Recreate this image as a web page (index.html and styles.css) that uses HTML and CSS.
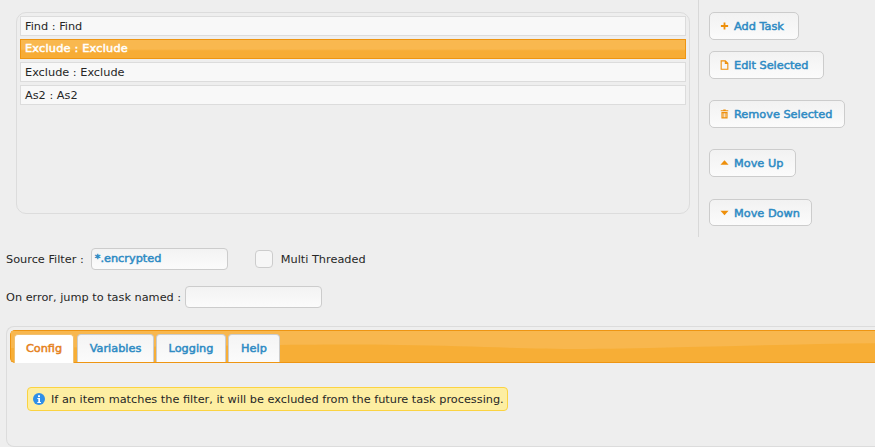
FILE: index.html
```html
<!DOCTYPE html>
<html lang="en">
<head>
<meta charset="utf-8">
<title>Tasks</title>
<link rel="stylesheet" href="styles.css">
</head>
<body>
<div class="top">
  <div class="list-col">
    <div class="list">
      <div class="item">Find : Find</div>
      <div class="item selected">Exclude : Exclude</div>
      <div class="item">Exclude : Exclude</div>
      <div class="item">As2 : As2</div>
    </div>
  </div>
  <div class="actions">
    <button class="btn b-add"><svg class="ico" viewBox="0 0 10 10"><path d="M4 1h2v3h3v2H6v3H4V6H1V4h3z"/></svg>Add Task</button>
    <button class="btn b-edit"><svg class="ico" viewBox="0 0 10 12"><path class="ol" d="M1 1h5l3 3v7H1z M6 1v3h3"/></svg>Edit Selected</button>
    <button class="btn b-remove"><svg class="ico" viewBox="0 0 10 12"><path d="M3.500 0.500h3v1h3v1.200h-9v-1.200h3z M1.300 3.500h7.400v8h-7.400z M2.800 5v5h0.900v-5z M4.600 5v5h0.900v-5z M6.300 5v5h0.900v-5z" fill-rule="evenodd"/></svg>Remove Selected</button>
    <button class="btn b-up"><svg class="ico" viewBox="0 0 10 10"><path d="M5 2l4.500 5h-9z"/></svg>Move Up</button>
    <button class="btn b-down"><svg class="ico" viewBox="0 0 10 10"><path d="M0.500 2.500h9l-4.500 5z"/></svg>Move Down</button>
  </div>
</div>
<div class="form-row row-source">
  <span class="lbl">Source Filter :</span>
  <div class="field filled">*.encrypted</div>
  <span class="check"></span>
  <span class="lbl">Multi Threaded</span>
</div>
<div class="form-row row-error">
  <span class="lbl">On error, jump to task named :</span>
  <div class="field"></div>
</div>
<div class="tabs-panel">
  <div class="tabbar">
    <svg class="gloss" viewBox="0 0 865 33" preserveAspectRatio="none"><path d="M0 0H865V13C780 14 690 17 600 19C520 20 470 16 390 15C300 13 200 17 0 18Z"/></svg>
    <div class="tab active">Config</div>
    <div class="tab t-var">Variables</div>
    <div class="tab t-log">Logging</div>
    <div class="tab t-help">Help</div>
  </div>
  <div class="tab-body">
    <div class="notice"><svg class="info" viewBox="0 0 12 12"><circle cx="6" cy="6" r="6"/><rect class="w" x="5" y="2.300" width="2" height="1.800"/><path class="w" d="M4.300 5h2.700v4h1v1H4.300V9h1V6h-1z"/></svg>If an item matches the filter, it will be excluded from the future task processing.</div>
  </div>
</div>
</body>
</html>
```
FILE: styles.css
```css
* { box-sizing: border-box; }
html, body { margin: 0; padding: 0; }
body {
  width: 875px;
  height: 447px;
  overflow: hidden;
  background: #eeeeee;
  color: #262626;
  font-family: "DejaVu Sans", sans-serif;
  font-size: 11.3px;
}
.top { display: flex; height: 237px; }
.list-col { width: 699px; padding: 12px 8px 23px 16px; border-right: 1px solid #d8d8d8; }
.list {
  height: 202px;
  border: 1px solid #dcdcdc;
  border-radius: 10px;
  padding: 3px;
  display: flex;
  flex-direction: column;
  gap: 3px;
}
.item {
  height: 20px;
  line-height: 20px;
  padding-left: 4px;
  background: #f8f8f8;
  border: 1px solid #dcdcdc;
}
.item.selected {
  border-color: #ee9512;
  color: #fff;
  -webkit-text-stroke: 0.5px #fff;
  letter-spacing: 0.2px;
  line-height: 18px;
  background: linear-gradient(#f9b84f 0, #f9b84f 50%, #f7ac35 60%, #f7ac35 100%);
}
.actions { display: flex; flex-direction: column; align-items: flex-start; padding: 12px 0 0 10px; }
.btn {
  display: flex;
  align-items: center;
  height: 28px;
  padding: 0 0 0 10px;
  white-space: nowrap;
  border: 1px solid #cccccc;
  border-radius: 5px;
  background: linear-gradient(#f2f2f2, #fbfbfb);
  color: #2e8bc4;
  font: 11.3px "DejaVu Sans", sans-serif;
  -webkit-text-stroke: 0.5px #2e8bc4;
}
.ico { width: 9px; height: 10px; margin-right: 5px; fill: #ee8f0a; flex: none; -webkit-text-stroke: 0; }
.ol { fill: none; stroke: #ee8f0a; stroke-width: 1.300; }
.b-add { width: 90px; }
.b-edit { width: 115px; margin-top: 11px; }
.b-remove { width: 136px; margin-top: 21px; }
.b-up { width: 87px; margin-top: 21px; }
.b-down { width: 103px; margin-top: 22px; height: 27px; padding-top: 1px; }
.form-row { display: flex; align-items: center; padding-left: 6px; }
.row-source { margin-top: 11px; height: 22px; }
.row-error { margin-top: 16px; height: 22px; }
.lbl { white-space: nowrap; }
.field {
  height: 22px;
  width: 137px;
  line-height: 20px;
  padding-left: 3px;
  border: 1px solid #cccccc;
  border-radius: 4px;
  background: linear-gradient(#f3f3f3, #fbfbfb);
}
.row-source .field { margin-left: 7px; }
.row-error .field { margin-left: 4px; }
.filled { color: #2e8bc4; -webkit-text-stroke: 0.5px #2e8bc4; }
.check {
  width: 18px;
  height: 18px;
  margin: 0 8px 0 27px;
  border: 1px solid #cccccc;
  border-radius: 4px;
  background: #f6f6f6;
}
.tabs-panel {
  margin: 18px 0 0 6px;
  height: 121px;
  border: 1px solid #dcdcdc;
  border-right: 0;
  border-radius: 8px 0 0 8px;
  padding: 3px 0 0 3px;
}
.tabbar {
  position: relative;
  display: flex;
  height: 33px;
  padding: 3px 0 0 3px;
  gap: 3px;
  background: #f7ae36;
  border: 1px solid #ee9512;
  border-right: 0;
  border-radius: 5px 0 0 5px;
}
.gloss { position: absolute; left: 0; top: 0; width: 100%; height: 100%; fill: #f8b74e; }
.tab {
  position: relative;
  height: 28px;
  line-height: 27px;
  text-align: center;
  color: #2e8bc4;
  -webkit-text-stroke: 0.5px #2e8bc4;
  background: linear-gradient(#f4f4f4, #fbfbfb);
  border: 1px solid #cccccc;
  border-bottom: 0;
  border-radius: 4px 4px 0 0;
}
.tab.active { width: 60px; height: 29px; color: #e5811c; -webkit-text-stroke-color: #e5811c; background: #fff; border-color: #f0c070; }
.t-var { width: 77px; }
.t-log { width: 70px; margin-left: -1px; }
.t-help { width: 52px; margin-left: -1px; }
.tab-body { padding: 24px 0 0 17px; }
.notice {
  display: flex;
  align-items: center;
  width: 481px;
  height: 24px;
  padding-left: 5px;
  white-space: nowrap;
  background: #fdeea2;
  border: 1px solid #fbd341;
  border-radius: 4px;
}
.info { width: 12px; height: 12px; margin-right: 6px; fill: #2f8fe8; flex: none; }
.info .w { fill: #fff; }
```
